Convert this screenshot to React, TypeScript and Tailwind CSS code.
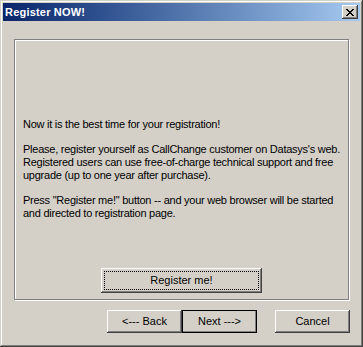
import React from 'react';

const raised =
  'bg-[#d4d0c8] shadow-[inset_-1px_-1px_#404040,inset_1px_1px_#ffffff,inset_-2px_-2px_#808080,inset_2px_2px_#d4d0c8]';

const Btn: React.FC<{ label: string; className?: string; isDefault?: boolean }> = ({ label, className = '', isDefault }) => (
  <button
    className={`${raised} ${className} ${isDefault ? 'outline outline-1 outline-black -outline-offset-1' : ''} flex items-center justify-center text-[11px] text-black leading-none`}
  >
    {label}
  </button>
);

export default function App() {
  return (
    <div
      className="w-[363px] h-[347px] p-[3px] bg-[#d4d0c8] shadow-[inset_-1px_-1px_#404040,inset_1px_1px_#d4d0c8,inset_-2px_-2px_#808080,inset_2px_2px_#ffffff] flex flex-col"
      style={{ fontFamily: '"Liberation Sans", Arial, sans-serif' }}
    >
      {/* title bar */}
      <div className="h-[18px] bg-gradient-to-r from-[#0a246a] to-[#a6caf0] flex items-center justify-between pl-[2px] pr-[2px]">
        <span className="text-white font-bold text-[11px] tracking-[0.2px]">Register NOW!</span>
        <div className={`${raised} w-[16px] h-[14px] flex items-center justify-center`}>
          <svg width="8" height="7" viewBox="0 0 8 7" shapeRendering="crispEdges">
            <path d="M0 0h2v1h-2zM6 0h2v1h-2zM1 1h2v1h-2zM5 1h2v1h-2zM2 2h4v1h-4zM3 3h2v1h-2zM2 4h4v1h-4zM1 5h2v1h-2zM5 5h2v1h-2zM0 6h2v1h-2zM6 6h2v1h-2z" fill="#000" />
          </svg>
        </div>
      </div>

      {/* group box */}
      <div className="ml-[11px] mt-[18px] w-[335px] h-[261px] border border-[#808080] shadow-[1px_1px_0_#ffffff,inset_1px_1px_0_#ffffff] flex flex-col">
        <div className="pl-[8px] pt-[78px] text-[11px] leading-[13px] text-black whitespace-nowrap tracking-[-0.25px]">
          <p>Now it is the best time for your registration!</p>
          <p className="mt-[12px]">
            Please, register yourself as CallChange customer on Datasys's web.
            <br />
            Registered users can use free-of-charge technical support and free
            <br />
            upgrade (up to one year after purchase).
          </p>
          <p className="mt-[12px]">
            Press "Register me!" button -- and your web browser will be started
            <br />
            and directed to registration page.
          </p>
        </div>
        <div className="mt-auto mb-[6px] flex justify-center">
          <button className={`${raised} w-[161px] h-[25px] relative text-[11px] text-black`}>
            <span className="absolute inset-[3px] border border-dotted border-black" />
            Register me!
          </button>
        </div>
      </div>

      {/* bottom buttons */}
      <div className="flex mt-[10px] ml-[104px]">
        <Btn label="<--- Back" className="w-[75px] h-[23px]" />
        <Btn label="Next --->" className="w-[75px] h-[23px]" isDefault />
        <Btn label="Cancel" className="w-[75px] h-[23px] ml-[18px]" />
      </div>
    </div>
  );
}
